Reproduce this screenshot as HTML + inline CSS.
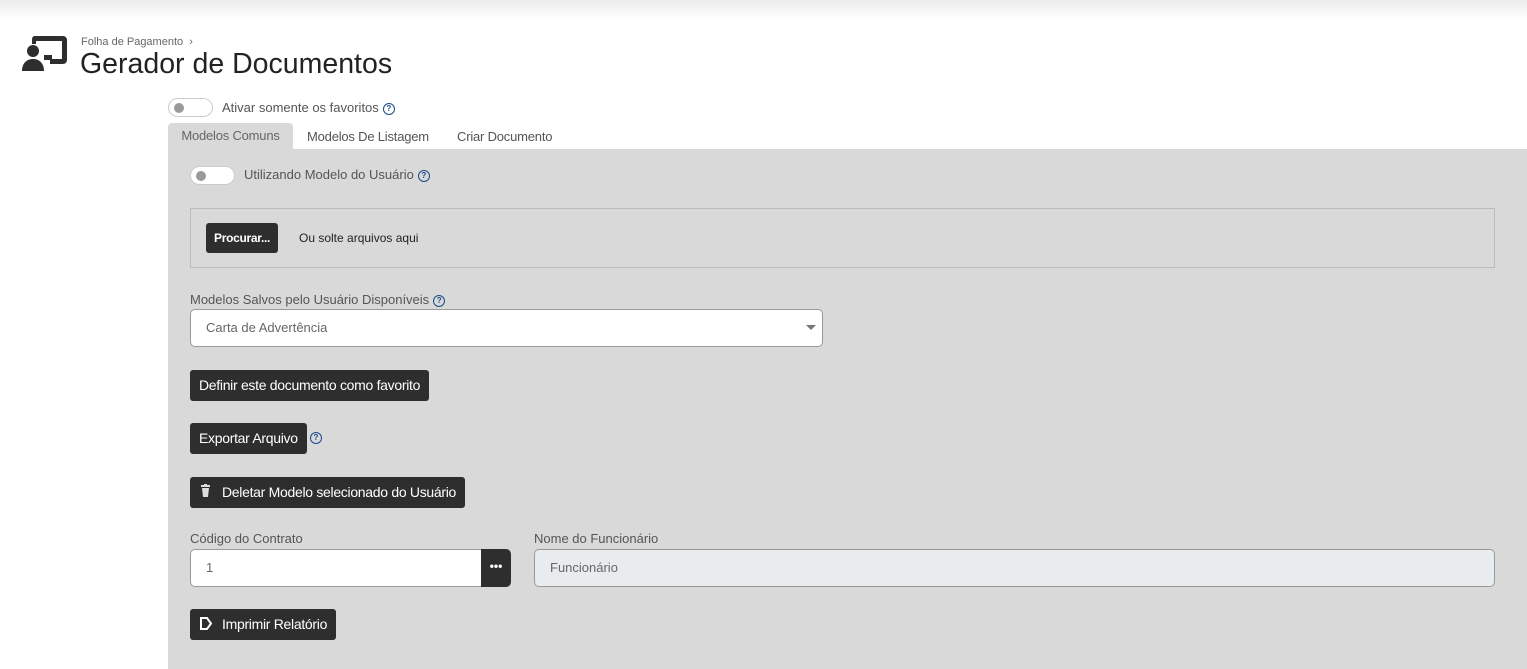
<!DOCTYPE html>
<html><head><meta charset="utf-8"><style>
*{box-sizing:border-box;margin:0;padding:0}
body{width:1527px;height:669px;overflow:hidden;background:#fff;font-family:"Liberation Sans",sans-serif;position:relative;color:#333}
.a{position:absolute}
.topbar{left:0;top:0;width:1527px;height:20px;background:linear-gradient(#ececec,#fff)}
.tog{border:1px solid #ccc;border-radius:10px;background:#fff;width:45px;height:19px}
.tog:after{content:"";position:absolute;left:5px;top:4px;width:10px;height:10px;border-radius:50%;background:#999}
.q{display:inline-block;width:12px;height:12px;border:1.3px solid #1a4a8a;border-radius:50%;font-size:8px;line-height:10px;text-align:center;color:#1a4a8a;font-weight:bold;vertical-align:1px;margin-left:4px}
.btn{background:#2e2e2e;color:#fff;border-radius:3px;font-size:14px;height:31px;line-height:31px;padding:0 9px;letter-spacing:-0.3px}
.lbl{font-size:13px;color:#555}
.panel{left:168px;top:149px;width:1359px;height:520px;background:#d9d9d9}
</style></head><body>
<div class="a topbar"></div>
<svg class="a" style="left:22px;top:34px" width="46" height="38" viewBox="0 0 46 38">
<path d="M12 2h29a4 4 0 0 1 4 4v20a4 4 0 0 1-4 4H28v-5h12V7H14v3h-4V6a4 4 0 0 1 2-4z" fill="#2e2e2e"/>
<rect x="22" y="21" width="8" height="5" fill="#2e2e2e"/>
<circle cx="11" cy="17" r="6" fill="#2e2e2e"/>
<path d="M0 37c0-7 4-12 11-12s11 5 11 12z" fill="#2e2e2e"/>
</svg>
<div class="a" style="left:81px;top:36px;font-size:11px;color:#666">Folha de Pagamento &nbsp;›</div>
<div class="a" style="left:80px;top:48px;font-size:28.5px;color:#222">Gerador de Documentos</div>
<div class="a tog" style="left:168px;top:98px"></div>
<div class="a lbl" style="left:222px;top:100px">Ativar somente os favoritos<span class="q">?</span></div>
<div class="a" style="left:168px;top:123px;width:125px;height:26px;background:#d9d9d9;border-radius:4px 4px 0 0;font-size:13px;color:#666;line-height:26px;text-align:center;letter-spacing:-0.2px">Modelos Comuns</div>
<div class="a lbl" style="left:307px;top:129px;letter-spacing:-0.2px">Modelos De Listagem</div>
<div class="a lbl" style="left:457px;top:129px;letter-spacing:-0.2px">Criar Documento</div>
<div class="a panel"></div>
<div class="a tog" style="left:190px;top:166px"></div>
<div class="a lbl" style="left:244px;top:167px">Utilizando Modelo do Usuário<span class="q">?</span></div>
<div class="a" style="left:190px;top:208px;width:1305px;height:60px;border:1px solid #bbb"></div>
<div class="a btn" style="left:206px;top:223px;height:30px;line-height:30px;font-size:12px;font-weight:bold;padding:0 8px">Procurar...</div>
<div class="a" style="left:299px;top:231px;font-size:12px;color:#222">Ou solte arquivos aqui</div>
<div class="a lbl" style="left:190px;top:292px">Modelos Salvos pelo Usuário Disponíveis<span class="q">?</span></div>
<div class="a" style="left:190px;top:309px;width:633px;height:38px;background:#fff;border:1px solid #999;border-radius:5px;font-size:13px;color:#666;line-height:36px;padding-left:15px">Carta de Advertência
<div class="a" style="right:6px;top:15px;border-left:5px solid transparent;border-right:5px solid transparent;border-top:5px solid #777"></div></div>
<div class="a btn" style="left:190px;top:370px">Definir este documento como favorito</div>
<div class="a btn" style="left:190px;top:423px">Exportar Arquivo</div>
<span class="a q" style="left:306px;top:432px">?</span>
<div class="a btn" style="left:190px;top:477px;padding-left:32px">Deletar Modelo selecionado do Usuário</div>
<svg class="a" style="left:200px;top:484px" width="11" height="13" viewBox="0 0 11 13"><rect x="1" y="1" width="9" height="2" fill="#ddd"/><rect x="4" y="0" width="3" height="2" fill="#ddd"/><path d="M2 4h7l-1 9H3z" fill="#ddd"/></svg>
<div class="a lbl" style="left:190px;top:531px">Código do Contrato</div>
<div class="a" style="left:190px;top:549px;width:292px;height:38px;background:#fff;border:1px solid #999;border-right:none;border-radius:5px 0 0 5px;font-size:13px;color:#666;line-height:36px;padding-left:15px">1</div>
<div class="a" style="left:481px;top:549px;width:30px;height:38px;background:#2e2e2e;border-radius:0 5px 5px 0;color:#fff;text-align:center;line-height:34px;font-size:12px;font-weight:bold">•••</div>
<div class="a lbl" style="left:534px;top:531px">Nome do Funcionário</div>
<div class="a" style="left:534px;top:549px;width:961px;height:38px;background:#e9ecef;border:1px solid #999;border-radius:5px;font-size:13px;color:#666;line-height:36px;padding-left:15px">Funcionário</div>
<div class="a btn" style="left:190px;top:609px;padding-left:32px">Imprimir Relatório</div>
<svg class="a" style="left:199px;top:616px" width="14" height="15" viewBox="0 0 14 15"><path d="M2 2h6l4 5.5-4 5.5H2z" fill="none" stroke="#fff" stroke-width="2"/></svg>
</body></html>
